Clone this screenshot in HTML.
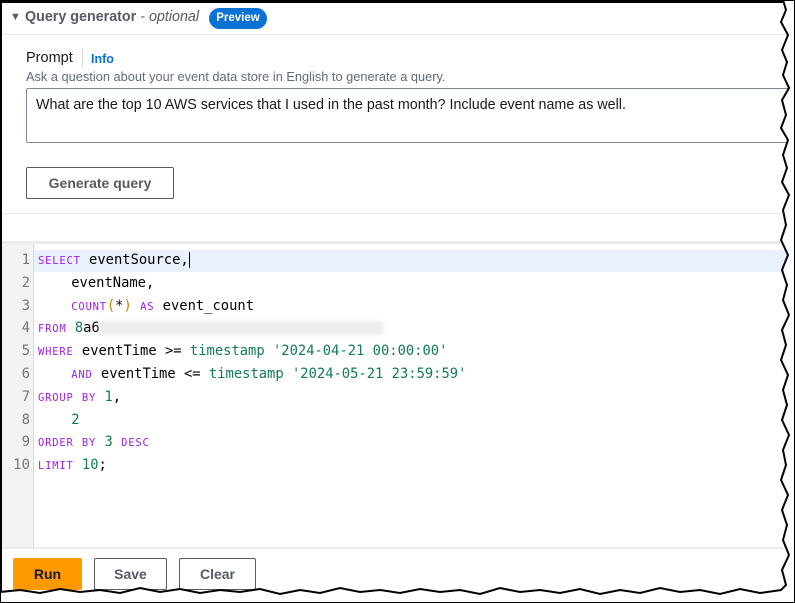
<!DOCTYPE html>
<html><head><style>
body{margin:0;width:795px;height:603px;background:#fff;position:relative;overflow:hidden;font-family:"Liberation Sans",sans-serif;color:#16191f}
.a{position:absolute}
.code{font-family:"DejaVu Sans Mono","Liberation Mono",monospace;font-size:13.8px;color:#000}
.code div{white-space:pre}
.code div,.ln div{height:22.8px;line-height:22.8px}
.k{color:#a21ee6;font-size:10.5px;letter-spacing:0.8px}
.g{color:#137a5a}
.ln{width:30px;text-align:right;color:#777;font-family:"DejaVu Sans Mono",monospace;font-size:14px}
.btn{border:1px solid #545b64;border-radius:2px;font-weight:bold;font-size:14px;color:#545b64;text-align:center;box-sizing:border-box}
</style></head><body>
<div class="a" style="left:0;top:0;width:795px;height:3px;background:#000"></div>
<div class="a" style="left:0;top:0;width:2px;height:603px;background:#000"></div>
<div class="a" style="left:10px;top:11px;font-size:11px;color:#545b64">▼</div>
<div class="a" style="left:25px;top:9px;font-size:14.3px;font-weight:bold;color:#545b64">Query generator <span style="font-weight:normal;font-style:italic">- optional</span></div>
<div class="a" style="left:209px;top:8px;width:58px;height:21px;border-radius:11px;background:#0972d3;color:#fff;font-size:11.5px;font-weight:bold;text-align:center;line-height:21px">Preview</div>
<div class="a" style="left:2px;top:34px;width:793px;height:1px;background:#e9ebed"></div>
<div class="a" style="left:26px;top:50px;font-size:14.5px">Prompt</div>
<div class="a" style="left:82px;top:49px;width:1px;height:18px;background:#d5dbdb"></div>
<div class="a" style="left:91px;top:52px;font-size:12.5px;font-weight:bold;color:#0972d3">Info</div>
<div class="a" style="left:26px;top:69px;font-size:12.8px;color:#5f6b7a">Ask a question about your event data store in English to generate a query.</div>
<div class="a" style="left:26px;top:88px;width:770px;height:55px;border:1px solid #7d8998;box-sizing:border-box;border-radius:2px"></div>
<div class="a" style="left:36px;top:97px;font-size:14.3px">What are the top 10 AWS services that I used in the past month? Include event name as well.</div>
<div class="a btn" style="left:26px;top:167px;width:148px;height:32px;line-height:30px">Generate query</div>
<div class="a" style="left:2px;top:213px;width:793px;height:1px;background:#e9ebed"></div>
<div class="a" style="left:2px;top:241px;width:793px;height:3px;background:#e9ebed"></div>
<div class="a" style="left:2px;top:244px;width:31px;height:303px;background:#f2f3f3"></div>
<div class="a" style="left:33px;top:244px;width:1px;height:303px;background:#d5dbdb"></div>
<div class="a" style="left:34px;top:250px;width:761px;height:22px;background:#e8f1fc"></div>
<div class="a" style="left:2px;top:547px;width:793px;height:2px;background:#e9ebed"></div>
<div class="a" style="left:0;top:249px">
<div class="ln" style="position:absolute;top:0"><div>1</div><div>2</div><div>3</div><div>4</div><div>5</div><div>6</div><div>7</div><div>8</div><div>9</div><div>10</div></div>
<div class="code" style="position:absolute;left:38px;top:0;width:740px"><div><span class="k">SELECT</span> eventSource,<span style="border-left:1px solid #000"></span></div><div>    eventName,</div><div>    <span class="k">COUNT</span><span style="color:#b58b00">(</span>*<span style="color:#b58b00">)</span> <span class="k">AS</span> event_count</div><div><span class="k">FROM</span> <span class="g">8</span>a6<span style="display:inline-block;width:283px;height:14px;background:#ececec;vertical-align:middle;filter:blur(2px)"></span></div><div><span class="k">WHERE</span> eventTime &gt;= <span class="g">timestamp '2024-04-21 00:00:00'</span></div><div>    <span class="k">AND</span> eventTime &lt;= <span class="g">timestamp '2024-05-21 23:59:59'</span></div><div><span class="k">GROUP</span> <span class="k">BY</span> <span class="g">1</span>,</div><div>    <span class="g">2</span></div><div><span class="k">ORDER</span> <span class="k">BY</span> <span class="g">3</span> <span class="k">DESC</span></div><div><span class="k">LIMIT</span> <span class="g">10</span>;</div></div>
</div>
<div class="a" style="left:13px;top:558px;width:69px;height:32px;background:#ff9900;border-radius:2px;font-weight:bold;font-size:14px;text-align:center;line-height:32px">Run</div>
<div class="a btn" style="left:94px;top:558px;width:73px;height:32px;line-height:30px">Save</div>
<div class="a btn" style="left:179px;top:558px;width:77px;height:32px;line-height:30px">Clear</div>
<svg class="a" style="left:0;top:0" width="795" height="603">
<path d="M795 0 L783 0 L786 10 L781 22 L788 35 L782 50 L787 62 L783 75 L789 88 L782 100 L786 115 L781 128 L788 140 L783 155 L787 168 L782 182 L789 195 L783 210 L786 225 L781 240 L788 255 L782 270 L787 285 L783 300 L789 315 L782 330 L786 345 L781 360 L788 375 L783 390 L787 405 L782 420 L789 435 L783 450 L786 465 L781 480 L788 495 L782 510 L787 525 L783 540 L789 555 L782 570 L786 585 L781 590 L760 593 L740 589 L720 594 L700 590 L680 592 L660 588 L640 593 L620 590 L600 594 L580 589 L560 593 L540 590 L520 592 L500 588 L480 594 L460 590 L440 592 L420 589 L400 593 L380 590 L360 592 L340 588 L320 593 L300 590 L280 594 L260 589 L240 592 L220 590 L200 593 L180 589 L160 592 L140 588 L120 593 L100 590 L80 592 L60 589 L40 593 L20 590 L0 592 L0 603 L795 603 Z" fill="#fff" stroke="#000" stroke-width="2"/>
</svg>
</body></html>
